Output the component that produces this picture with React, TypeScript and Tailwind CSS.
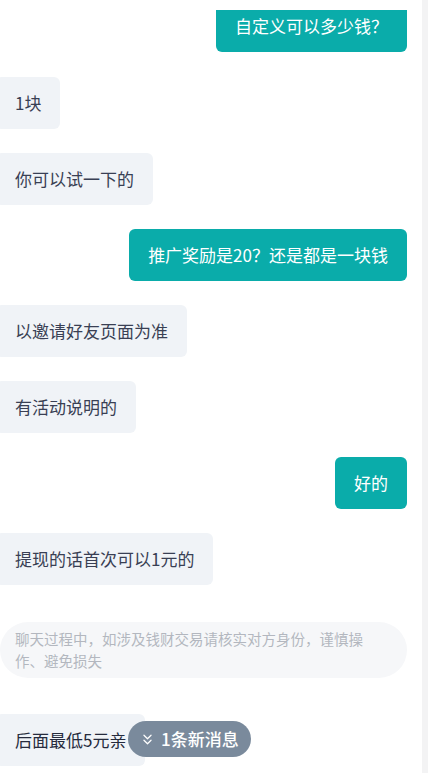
import { ChevronsDown } from "lucide-react";

type Msg = { text: string; mine: boolean };

const messages: Msg[] = [
  { text: "1块", mine: false },
  { text: "你可以试一下的", mine: false },
  { text: "推广奖励是20？还是都是一块钱", mine: true },
  { text: "以邀请好友页面为准", mine: false },
  { text: "有活动说明的", mine: false },
  { text: "好的", mine: true },
  { text: "提现的话首次可以1元的", mine: false },
];

const Bubble = ({ text, mine }: Msg) => (
  <div className={mine ? "flex justify-end" : "flex justify-start"}>
    <div
      className={
        mine
          ? "h-[52px] px-[19px] flex items-center rounded-[6px] bg-[#0aacaa] text-white text-[17px]"
          : "h-[52px] px-[19px] -ml-[4px] flex items-center rounded-[6px] bg-[#f0f3f7] text-[#393f54] text-[17px]"
      }
    >
      {text}
    </div>
  </div>
);

export default function App() {
  return (
    <div
      className="flex h-[773px] w-[428px] overflow-hidden bg-white"
      style={{ fontFamily: '"Noto Sans CJK SC", "Noto Sans", sans-serif' }}
    >
      <div className="flex flex-col w-[422px] pr-[15px] pt-[10px]">
        {/* top bubble, scrolled partly out of view */}
        <div className="flex justify-end h-[42px] overflow-hidden">
          <div className="-mt-[10px] h-[52px] px-[19px] flex items-center rounded-[6px] bg-[#0aacaa] text-white text-[17px]">
            自定义可以多少钱？
          </div>
        </div>

        <div className="flex flex-col gap-[24px] mt-[25px]">
          {messages.map((m, i) => (
            <Bubble key={i} {...m} />
          ))}
        </div>

        <div className="mt-[37px] rounded-[28px] bg-[#f6f7f9] pl-[15px] pr-[36px] py-[6px] text-[14.5px] leading-[22px] text-[#b3b7bf]">
          聊天过程中，如涉及钱财交易请核实对方身份，谨慎操作、避免损失
        </div>

        <div className="relative mt-[36px]">
          <div className="flex justify-start">
            <div className="h-[52px] px-[19px] -ml-[4px] flex items-center rounded-[6px] bg-[#f0f3f7] text-[#262b3d] text-[17px]">
              后面最低5元亲
            </div>
          </div>
          <div className="absolute left-[128px] top-[7px] h-[36px] pl-[11px] pr-[12px] flex items-center gap-[5px] rounded-full bg-[#7a8a9c] text-white text-[17px] font-medium">
            <ChevronsDown size={17} strokeWidth={1.75} />
            <span>1条新消息</span>
          </div>
        </div>
      </div>
      <div className="w-[6px] bg-[#f3f3f4]" />
    </div>
  );
}
